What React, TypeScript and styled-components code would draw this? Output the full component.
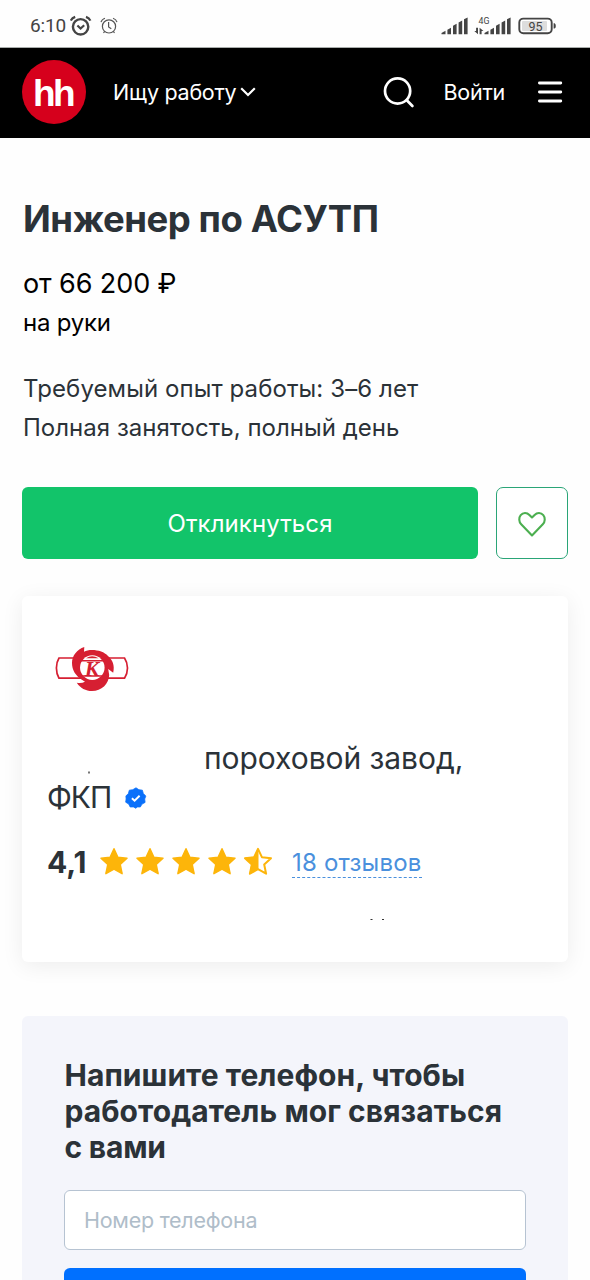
import React from "react";
import styled, { createGlobalStyle } from "styled-components";

const Global = createGlobalStyle`
  * { box-sizing: border-box; }
  html, body { margin: 0; background: #fff; }
  body { font-family: Inter, "Liberation Sans", sans-serif; color: #2b3238; overflow: hidden; }
  h1, h2, p { margin: 0; }
  svg { display: block; flex: none; }
`;

const Screen = styled.div`
  width: 590px;
  height: 1280px;
  overflow: hidden;
  background: #fefefe;
`;

const StatusBar = styled.div`
  height: 48px;
  padding: 5px 33px 0 30px;
  display: flex;
  align-items: center;
  border-bottom: 1px solid #a9adab;
`;

const Clock = styled.span`
  width: 40px;
  font: 400 19px/24px Roboto, sans-serif;
  letter-spacing: -0.15px;
  color: #444;
  white-space: nowrap;
`;

const Signals = styled.div`
  margin-left: auto;
`;

const Header = styled.header`
  height: 90px;
  padding: 0 26px 2px 22px;
  display: flex;
  align-items: center;
  background: #000;
  color: #fff;
`;

const Logo = styled.div`
  width: 64px;
  height: 64px;
  border-radius: 50%;
  background: #d6001c;
  display: flex;
  align-items: center;
  justify-content: center;
  padding: 3px 2px 0 0;
  font: 700 37px/60px "Liberation Sans", sans-serif;
  letter-spacing: -2.5px;
`;

const NavLink = styled.a<{ $left: number; $spacing: number }>`
  margin-left: ${(p) => p.$left}px;
  font-size: 21.5px;
  line-height: 30px;
  letter-spacing: ${(p) => p.$spacing}px;
  white-space: nowrap;
`;

const IconSlot = styled.span<{ $left?: number | "auto" }>`
  margin-left: ${(p) => (p.$left === "auto" ? "auto" : `${p.$left ?? 0}px`)};
`;

const Main = styled.main`
  padding: 58px 22px 0;
`;

const Title = styled.h1`
  padding-left: 1px;
  font-size: 36.5px;
  line-height: 46px;
  font-weight: 700;
  letter-spacing: -0.45px;
  white-space: nowrap;
`;

const Salary = styled.p`
  margin-top: 22px;
  padding-left: 1px;
  font-size: 27px;
  line-height: 40px;
  letter-spacing: -0.1px;
  color: #000;
`;

const SalaryNote = styled.p`
  padding-left: 1px;
  font-size: 24px;
  line-height: 38px;
  letter-spacing: -0.25px;
  color: #000;
`;

const Requirements = styled.div`
  margin-top: 27px;
  padding-left: 1px;
  font-size: 24px;
  line-height: 39px;
  white-space: nowrap;
`;

const Requirement = styled.p<{ $spacing: number }>`
  letter-spacing: ${(p) => p.$spacing}px;
`;

const Actions = styled.div`
  margin-top: 40px;
  display: flex;
  gap: 18px;
`;

const ApplyButton = styled.button`
  width: 456px;
  height: 72px;
  padding: 2px 0 0;
  border: 0;
  border-radius: 6px;
  background: #12c46a;
  color: #fff;
  font: 400 24px/70px Inter, sans-serif;
  letter-spacing: 0.1px;
`;

const LikeButton = styled.button`
  width: 72px;
  height: 72px;
  padding: 2px 0 0;
  border: 1px solid #2aa577;
  border-radius: 7px;
  background: #fff;
  display: flex;
  align-items: center;
  justify-content: center;
`;

const Card = styled.section`
  height: 366px;
  margin-top: 37px;
  padding: 46px 25px 0;
  border-radius: 6px;
  background: #fff;
  box-shadow: 0 4px 22px rgba(0, 0, 0, 0.07);
`;

const EmployerLogo = styled.div`
  margin-left: 7px;
`;

const Employer = styled.div`
  margin-top: 45px;
  font-size: 30px;
  line-height: 39px;
`;

const EmployerLine = styled.div<{ $gap: number; $spacing: number }>`
  height: 39px;
  display: flex;
  align-items: center;
  gap: ${(p) => p.$gap}px;
  letter-spacing: ${(p) => p.$spacing}px;
  white-space: nowrap;
`;

const NameTraces = styled.div`
  width: 157px;
`;

const Rating = styled.div`
  height: 40px;
  margin-top: 25px;
  display: flex;
  align-items: center;
`;

const Score = styled.span`
  width: 52px;
  font-size: 30px;
  font-weight: 700;
  line-height: 40px;
`;

const Stars = styled.div`
  display: flex;
  gap: 6px;
`;

const Reviews = styled.a`
  margin: 0 0 0 19px;
  height: 31px;
  font-size: 24px;
  line-height: 32px;
  letter-spacing: 0.2px;
  color: #4a90dd;
  border-bottom: 1px dashed #4a90dd;
  white-space: nowrap;
`;

const AddressTraces = styled.div`
  margin: 36px 0 0 321px;
`;

const PhonePanel = styled.section`
  height: 300px;
  margin-top: 54px;
  padding: 41px 42px 0;
  border-radius: 6px;
  background: #f4f5fb;
`;

const PhoneTitle = styled.h2`
  padding-left: 0.5px;
  font-size: 30px;
  line-height: 36px;
  font-weight: 700;
  white-space: nowrap;
`;

const TitleLine = styled.span<{ $spacing: number }>`
  display: block;
  letter-spacing: ${(p) => p.$spacing}px;
`;

const PhoneInput = styled.input`
  display: block;
  width: 462px;
  height: 60px;
  margin-top: 25px;
  padding: 0 19px;
  border: 1px solid #b6c3d2;
  border-radius: 6px;
  background: #fff;
  font: 400 21.5px/30px Inter, sans-serif;
  letter-spacing: -0.25px;
  &::placeholder { color: #afbdc9; opacity: 1; }
`;

const SubmitButton = styled.button`
  display: block;
  width: 462px;
  height: 60px;
  margin-top: 18px;
  border: 0;
  border-radius: 6px;
  background: #0070ff;
`;

const AlarmBold = () => (
  <svg width="22" height="22" viewBox="0 0 22 22" fill="none" stroke="#444">
    <circle cx="10.6" cy="11.8" r="7.7" strokeWidth="2.4" />
    <path d="M7.4 10.5l3.2 3 3.6-3.2" strokeWidth="2.2" />
    <path d="M.8 5.600Q2 3 5.200 1.900M20.400 5.600Q19.200 3 16 1.900" strokeWidth="2.2" />
  </svg>
);

const AlarmThin = () => (
  <svg width="18" height="18" viewBox="0 0 18 18" fill="none" stroke="#555" strokeWidth="1.2">
    <circle cx="9" cy="9.4" r="6.6" />
    <path d="M8.600 5v4.900l2.700 1.800M1 5.200q.8-3 4-4M17 5.200q-.8-3-4-4M4.700 14.400L3.500 16M13.300 14.400l1.200 1.600" />
  </svg>
);

const SignalBattery = () => (
  <svg width="116" height="24" viewBox="441 14 116 24" fill="#444">
    <g id="bars">
      <path d="M441.500 34.300v-1.300l4-2.300v3.600z" />
      <path d="M447.400 34.300v-4.600l3.600-2v6.600z" />
      <path d="M453 34.300v-8.600l3.600-2v10.600z" />
      <path d="M458.600 34.300v-11.800l3.600-2v13.800z" />
      <path d="M464 34.300v-15l3.600-1.800v16.800z" />
    </g>
    <use href="#bars" x="43" />
    <path d="M478 27.700v6.600l-3.700-3.400h1.800v-3.200zM479.600 34.300v-6.600l3.900 3.400h-1.900v3.200z" />
    <text x="478.5" y="23.5" fontFamily="Roboto, sans-serif" fontSize="8.8">4G</text>
    <rect x="519.3" y="18.6" width="32.4" height="14.6" rx="4" fill="#fff" stroke="#444" strokeWidth="1.9" />
    <rect x="522" y="21" width="25" height="10" rx="1" fill="#ddd" />
    <path d="M553.600 23.200h1q1.200.6 1.200 2.700t-1.200 2.700h-1z" />
    <text x="528.5" y="30.5" fontFamily="Roboto, sans-serif" fontWeight="400" fontSize="12.5">95</text>
  </svg>
);

const starPath =
  "M15 1.8l3.9 8.4 9.1 1-6.8 6.3 1.9 9.2L15 22.2l-8.1 4.5 1.9-9.2L2 11.2l9.1-1z";

const Star = ({ half = false }: { half?: boolean }) => (
  <svg width="30" height="30" viewBox="0 0 30 30" strokeLinejoin="round">
    {half ? (
      <>
        <path d="M15 2.2v20L6.9 26.7l1.9-9.2L2 11.2l9.1-1z" fill="#fdb50a" stroke="#fdb50a" />
        <path d={starPath} fill="none" stroke="#fdb50a" strokeWidth="2" />
      </>
    ) : (
      <path d={starPath} fill="#fdb50a" stroke="#fdb50a" strokeWidth="1.5" />
    )}
  </svg>
);

const FactoryLogo = () => (
  <svg width="76" height="52" viewBox="54 642 76 52">
    <path
      d="M59 658h65.500q3 4.500 3 10t-3 10.200H59q-2.600-4.400-2.600-10.200t2.600-10z"
      fill="#fff"
      stroke="#d61f32"
      strokeWidth="1.7"
    />
    <path
      d="M84.300 647C77 649.500 72 655.500 72 663c0 7 3.500 12.500 9.500 16.500l3.500 2.300c-2.500 1.200-5 1.500-8.200.9 3.400 5.300 9 8.300 15.200 8.300 9.500 0 16.800-7 17.200-16l-1-6 5 3.800c1.800-7.500-.7-13-5.200-16.800C104.500 652 98.500 650 92 650c-3.300 0-5.800.6-8 1.700z"
      fill="#d61f32"
    />
    <circle cx="92.3" cy="667.6" r="12.3" fill="#fff" />
    <path d="M80.500 660.700h23.500M80.500 676h23.500" stroke="#d61f32" strokeWidth="1.5" />
    <path d="M86 658.200q6-4 12.600 0z" fill="#d61f32" />
    <text x="92" y="675.5" textAnchor="middle" fontFamily="Liberation Serif, serif" fontStyle="italic" fontWeight="700" fontSize="21.5" fill="#d61f32">К</text>
  </svg>
);

const Verified = () => (
  <svg width="22" height="22" viewBox="0 0 22 22">
    <path
      d="M11 .8l2.900 1.900 3.500.5.900 3.300 2.500 2.600-1.100 2.900.4 3.400-3.100 1.700-1.700 2.900-3.100-.1L11 21.300l-2.600-1.400-3.200.1-1.500-3-3-1.800.4-3.300L.9 9l2.500-2.500.9-3.300 3.500-.5z"
      fill="#0a70fa"
      stroke="#0a70fa"
      strokeWidth=".8"
      strokeLinejoin="round"
    />
    <path d="M6.900 11.200l2.700 2.500 5-4.900" fill="none" stroke="#fff" strokeWidth="1.9" />
  </svg>
);

export default function App() {
  return (
    <Screen>
      <Global />
      <StatusBar>
        <Clock>6:10</Clock>
        <AlarmBold />
        <IconSlot $left={8}><AlarmThin /></IconSlot>
        <Signals><SignalBattery /></Signals>
      </StatusBar>

      <Header>
        <Logo>hh</Logo>
        <NavLink $left={27} $spacing={-0.3}>Ищу работу</NavLink>
        <IconSlot $left={4}>
          <svg width="16" height="10" viewBox="0 0 16 10" fill="none" stroke="#fff" strokeWidth="2.2">
            <path d="M1.200 1.200L8 8l6.800-6.800" />
          </svg>
        </IconSlot>
        <IconSlot $left="auto">
          <svg width="32" height="32" viewBox="0 0 32 32" fill="none" stroke="#fff" strokeWidth="2.7" strokeLinecap="round">
            <circle cx="14.6" cy="15" r="12.6" />
            <path d="M23.800 24.200l5.600 5.800" />
          </svg>
        </IconSlot>
        <NavLink $left={29} $spacing={-0.25}>Войти</NavLink>
        <IconSlot $left={33}>
          <svg width="26" height="24" viewBox="0 0 26 24" stroke="#fff" strokeWidth="2.8" strokeLinecap="round">
            <path d="M1.400 3h21.400M1.400 12h21.400M1.400 21h21.400" />
          </svg>
        </IconSlot>
      </Header>

      <Main>
        <Title>Инженер по АСУТП</Title>
        <Salary>от 66 200 ₽</Salary>
        <SalaryNote>на руки</SalaryNote>
        <Requirements>
          <Requirement $spacing={0.09}>Требуемый опыт работы: 3–6 лет</Requirement>
          <Requirement $spacing={0.02}>Полная занятость, полный день</Requirement>
        </Requirements>

        <Actions>
          <ApplyButton>Откликнуться</ApplyButton>
          <LikeButton aria-label="В избранное">
            <svg width="30" height="28" viewBox="0 0 30 28" fill="none" stroke="#4caf50" strokeWidth="2.1" strokeLinejoin="round">
              <path d="M15 25.500L4.200 14.300C1.800 11.800 1.600 7.600 3.700 5.100c2.300-2.700 6.200-2.700 8.700-.2L15 7.500l2.600-2.600c2.500-2.500 6.400-2.500 8.700.2 2.100 2.500 1.900 6.700-.5 9.200z" />
            </svg>
          </LikeButton>
        </Actions>

        <Card>
          <EmployerLogo><FactoryLogo /></EmployerLogo>
          <Employer>
            <EmployerLine $gap={0} $spacing={-0.06}>
              <NameTraces>
                <svg width="120" height="39" viewBox="0 0 120 39">
                  <path d="M41 32.500h2v2h-2z" fill="#777" />
                </svg>
              </NameTraces>
              пороховой завод,
            </EmployerLine>
            <EmployerLine $gap={14} $spacing={-1}>
              ФКП
              <Verified />
            </EmployerLine>
          </Employer>
          <Rating>
            <Score>4,1</Score>
            <Stars>
              <Star /><Star /><Star /><Star /><Star half />
            </Stars>
            <Reviews>18 отзывов</Reviews>
          </Rating>
          <AddressTraces>
            <svg width="20" height="3" viewBox="0 0 20 3" fill="#333">
              <path d="M2.500 1h2v1h-2zM14 1h2v1h-2z" />
            </svg>
          </AddressTraces>
        </Card>

        <PhonePanel>
          <PhoneTitle>
            <TitleLine $spacing={0.04}>Напишите телефон, чтобы</TitleLine>
            <TitleLine $spacing={0.06}>работодатель мог связаться</TitleLine>
            <TitleLine $spacing={-0.2}>с вами</TitleLine>
          </PhoneTitle>
          <PhoneInput placeholder="Номер телефона" />
          <SubmitButton aria-label="Отправить" />
        </PhonePanel>
      </Main>
    </Screen>
  );
}
